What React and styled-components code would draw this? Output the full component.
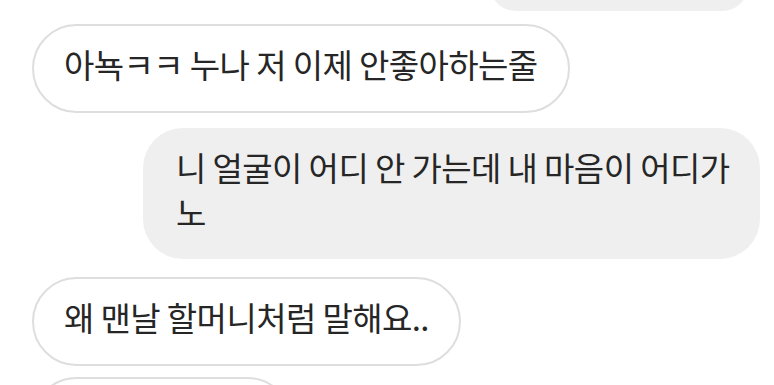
import React from 'react';
import styled, { createGlobalStyle } from 'styled-components';

const GlobalStyle = createGlobalStyle`
  html, body {
    margin: 0;
    padding: 0;
    background: #ffffff;
  }
  body {
    width: 774px;
    height: 385px;
    overflow: hidden;
  }
`

const Thread = styled.div`
  display: flex;
  flex-direction: column;
  width: 774px;
  height: 385px;
  overflow: hidden;
  font-family: "Noto Sans CJK KR", "Noto Sans", sans-serif;
  color: #262626;
`

const Row = styled.div`
  display: flex;
  justify-content: ${p => (p.mine ? 'flex-end' : 'flex-start')};
  margin-top: ${p => p.top}px;
  padding: 0 ${p => p.side}px;
  flex-shrink: 0;
`

// text sits a little high in the bubble, so top padding < bottom
const Bubble = styled.div`
  box-sizing: border-box;
  font-size: 33px;
  font-weight: 400;
  line-height: 45px;
  letter-spacing: -0.6px;
  word-break: break-all;
  white-space: ${p => (p.mine ? 'normal' : 'nowrap')};
  padding: ${p => (p.mine ? '16.5px 20px 24.5px 33px' : '16px 30px 24px')};
  border-radius: ${p => (p.mine ? '40px' : '46px')};
  background: ${p => (p.mine ? '#efefef' : '#ffffff')};
  border: ${p => (p.mine ? 'none' : '2px solid #dedede')};
  width: ${p => (p.w ? `${p.w}px` : 'auto')};
  height: ${p => (p.h ? `${p.h}px` : 'auto')};
`

export default function App() {
  return (
    <>
      <GlobalStyle />
      <Thread>
        <Row mine top={-40} side={26}>
          <Bubble mine w={258} h={51} />
        </Row>
        <Row top={13} side={32}>
          <Bubble>아뇩ㅋㅋ 누나 저 이제 안좋아하는줄</Bubble>
        </Row>
        <Row mine top={15} side={14}>
          <Bubble mine w={617}>니 얼굴이 어디 안 가는데 내 마음이 어디가노</Bubble>
        </Row>
        <Row top={18} side={32}>
          <Bubble>왜 맨날 할머니처럼 말해요..</Bubble>
        </Row>
        <Row top={11} side={32}>
          <Bubble w={260} h={89}>&nbsp;</Bubble>
        </Row>
      </Thread>
    </>
  );
}
